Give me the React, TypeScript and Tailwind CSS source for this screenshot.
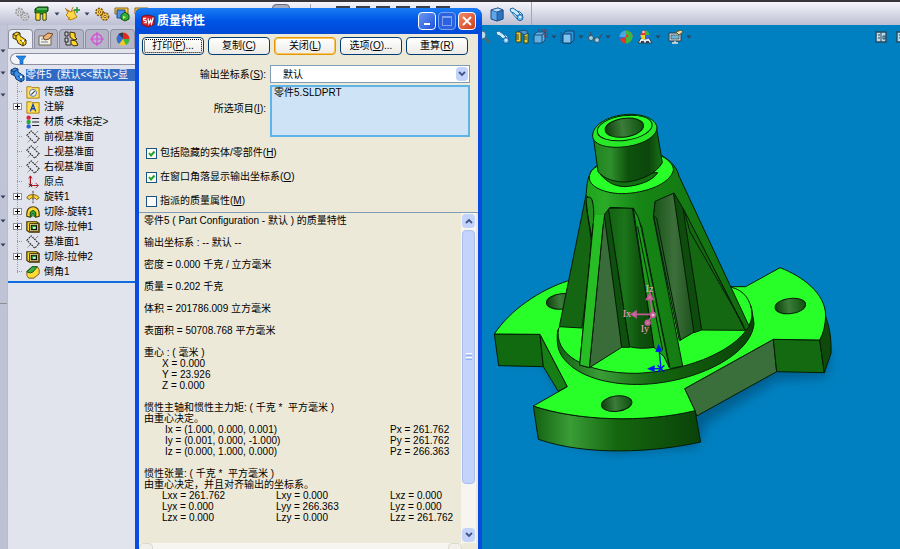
import type { ReactNode } from "react";

type IconProps = { children: ReactNode; className?: string; box?: string };

const Icon = ({ children, className = "h-4 w-4", box = "0 0 16 16" }: IconProps) => (
  <svg viewBox={box} className={`block shrink-0 ${className}`} aria-hidden="true">
    {children}
  </svg>
);

const Caret = () => (
  <Icon className="h-1 w-1.5" box="0 0 6 4">
    <path d="M0.5 0.500h5L3 3.500z" fill="#33415c" />
  </Icon>
);

/* toolbar icons */

const GearsIcon = ({ fill, stroke }: { fill: string; stroke: string }) => (
  <Icon>
    <circle cx="5.5" cy="6" r="3.6" fill={fill} stroke={stroke} strokeWidth="1.6" strokeDasharray="2 1" />
    <circle cx="5.5" cy="6" r="1.2" fill="#fff" stroke={stroke} />
    <circle cx="11" cy="10.5" r="3.6" fill={fill} stroke={stroke} strokeWidth="1.6" strokeDasharray="2 1" />
    <circle cx="11" cy="10.5" r="1.2" fill="#fff" stroke={stroke} />
  </Icon>
);

const FixtureIcon = () => (
  <Icon>
    <path d="M1 3l3-2h10v4l-2 1v8H9V8H6v6H2V7H1z" fill="#1c8a22" stroke="#0d3d10" />
    <path d="M2 7h4v7H2zM9 7h3v7H9z" fill="#ffdf3a" stroke="#5d5208" strokeWidth="0.7" />
    <path d="M3 3h10" stroke="#8be08e" />
  </Icon>
);

const SparkIcon = () => (
  <Icon>
    <path d="M2 3l5 3 3-2 1 4 2 3-4 2-3 1-2-3-2-2 2-2z" fill="#ffd84a" stroke="#b08410" />
    <path d="M1 2l4 4M9 1l-2 5M4 14l2-3" stroke="#d87d12" />
    <path d="M13 1v6M10 4h6" stroke="#15902d" strokeWidth="1.4" />
  </Icon>
);

const WindowPartIcon = () => (
  <Icon>
    <path d="M1 2h13v6H1z" fill="#ffc83d" stroke="#8c6710" />
    <path d="M3 4h8v8H3z" fill="#4d8fe0" stroke="#1d4a93" />
    <path d="M7 9l4-3 4 3v4l-4 2-4-2z" fill="#2fae38" stroke="#0e5414" />
    <path d="M9 10l3 1-3 2z" fill="#ffe94e" />
  </Icon>
);

const CubeIcon = () => (
  <Icon>
    <path d="M2 4l7-2 5 2v9l-6 2-6-2z" fill="#5ea6e8" stroke="#1a4c8c" />
    <path d="M2 4l6 2 6-2-5-2z" fill="#bfe0fb" stroke="#1a4c8c" strokeWidth="0.7" />
    <path d="M8 6v9l6-2V4z" fill="#2f72be" stroke="#1a4c8c" strokeWidth="0.7" />
  </Icon>
);

const SectionIcon = () => (
  <Icon>
    <path d="M1 3l3-1 4 3 3 1 3 3-3 3-3-2-3-3-3-1z" fill="#c6ecfb" stroke="#1d6da8" />
    <circle cx="11" cy="11.500" r="3" fill="#6cc4f0" stroke="#17559f" />
    <path d="M3 7l5 6M6 3l5 5" stroke="#2c78b5" />
    <circle cx="11" cy="11" r="1" fill="#fff" />
  </Icon>
);

const MagnifierIcon = () => (
  <Icon>
    <circle cx="6" cy="6" r="4" fill="#b9d8e8" stroke="#4e6a78" />
    <path d="M9 9l5 5" stroke="#53656e" strokeWidth="2.4" />
  </Icon>
);

const RulerIcon = () => (
  <Icon>
    <path d="M2 3h5v10H2zM10 4h4v10h-4z" fill="#e8cf3c" stroke="#3a4016" />
    <path d="M5 2l7-1 2 3-4 2z" fill="#4b94ce" stroke="#1a4c7c" />
    <path d="M2 6h3M2 8h3M2 10h3M10 8h3M10 10h3" stroke="#3a4016" />
  </Icon>
);

const OrientationIcon = () => (
  <Icon>
    <path d="M1 6l3-3h8v8l-3 3H1z" fill="#5fb0e4" stroke="#1d4b78" />
    <path d="M1 6h8v8M9 6l3-3" fill="none" stroke="#1d4b78" />
    <path d="M5 1h9v8M11 1v6h4" fill="none" stroke="#8a3046" strokeDasharray="2 1" />
  </Icon>
);

const DisplayStyleIcon = () => (
  <Icon>
    <path d="M3 5l3-3h8v9l-3 3H3z" fill="#2c8fd8" stroke="#15406e" />
    <path d="M3 5h8v9H3z" fill="#7cc4ee" stroke="#15406e" />
    <path d="M1 3v11" stroke="#15406e" strokeDasharray="1 1" />
  </Icon>
);

const GlassesIcon = () => (
  <Icon>
    <circle cx="4" cy="9" r="2.5" fill="#9fd2e8" stroke="#39546a" />
    <circle cx="10" cy="11" r="2.5" fill="#9fd2e8" stroke="#39546a" />
    <path d="M6 9l2 1M3 7l1-4M12 10l3-5" fill="none" stroke="#39546a" strokeWidth="1.300" />
  </Icon>
);

const Ball = ({ r = 6.5, cy = 8 }: { r?: number; cy?: number }) => (
  <>
    <circle cx="8" cy={cy} r={r} fill="#2f6de0" />
    <path d={`M8 ${cy}V${cy - r}A${r} ${r} 0 0 0 ${8 - r} ${cy}z`} fill="#e3362b" />
    <path d={`M8 ${cy}V${cy - r}A${r} ${r} 0 0 1 ${8 + r} ${cy}z`} fill="#3cb83c" />
    <path d={`M8 ${cy}H${8 - r}A${r} ${r} 0 0 0 8 ${cy + r}z`} fill="#f5cf30" />
    <circle cx="6.5" cy={cy - 3} r="1.3" fill="#fff" opacity="0.7" />
  </>
);

/* view toolbar: red top left, green top right, blue and red below */
const AppearanceIcon = () => (
  <Icon>
    <circle cx="8" cy="8" r="6.5" fill="#2f6de0" />
    <path d="M8 8V1.500A6.500 6.500 0 0 1 14.500 8z" fill="#e8c93a" />
    <path d="M8 8H14.500A6.500 6.500 0 0 1 8 14.500z" fill="#3cb83c" />
    <path d="M8 1.500A6.500 6.500 0 0 1 14.500 8L8 8z" fill="#d93a30" />
    <path d="M8 8v6.500A6.500 6.500 0 0 1 2 10z" fill="#e3362b" />
    <path d="M8 8V1.500A6.500 6.500 0 0 0 1.500 8z" fill="#4aa8e0" />
    <path d="M8 1.500A6.500 6.500 0 0 1 14.500 8L11 8 8 5z" fill="#3cb83c" />
  </Icon>
);

const SceneIcon = () => (
  <Icon>
    <path d="M1 14l3-5h8l3 5z" fill="#e5edf0" stroke="#31414c" />
    <path d="M4 12h3v2H4zM9 12h3v2H9z" fill="#31414c" />
    <Ball r={4.5} cy={6} />
  </Icon>
);

const MonitorIcon = () => (
  <Icon>
    <path d="M1 4h12v8H1z" fill="#c9d2d4" stroke="#333d44" />
    <path d="M3 6h8v4H3z" fill="#6fb6d4" stroke="#333d44" strokeWidth="0.600" />
    <path d="M4 14h6M7 12v2" stroke="#e0e4e4" strokeWidth="1.4" />
    <path d="M8 3l5-2 2 2-4 3z" fill="#e5dca0" stroke="#5a5630" />
  </Icon>
);

const PaneIcon = () => (
  <Icon className="h-3 w-3" box="0 0 12 12">
    <path d="M1 1h10v10H1z" fill="#bcdcea" stroke="#24495e" strokeWidth="1.4" />
    <path d="M6 1v10" stroke="#24495e" />
    <path d="M3 4h2M3 7h2M8 5h2v3H8z" stroke="#24495e" fill="none" />
  </Icon>
);

const BarIcon = () => (
  <Icon>
    <path d="M2 1h12v13H2z" fill="#aeb3c4" stroke="#3c3f4a" strokeWidth="2" />
  </Icon>
);

/* tree icons */

const PartIcon = ({ fill, stroke }: { fill: string; stroke: string }) => (
  <Icon>
    <path d="M1 3l4-2 3 1v3l6 4v4l-3 2-5-3-1-3-4-2z" fill={fill} stroke={stroke} />
    <path d="M1 3l3 2 4-3M4 5v3M8 9l3 2 3-2M11 11v4" fill="none" stroke={stroke} />
    <circle cx="11" cy="10" r="1.2" fill="#fff" />
  </Icon>
);

const SensorIcon = () => (
  <Icon>
    <path d="M1 2h5l1 1h8v12H1z" fill="#ffdf63" stroke="#a57607" />
    <circle cx="8" cy="9" r="4" fill="#f7f7f7" stroke="#3d6cae" />
    <path d="M6 11l4-4" stroke="#333" strokeWidth="1.300" />
  </Icon>
);

const NoteIcon = () => (
  <Icon>
    <path d="M1 2h5l1 1h8v12H1z" fill="#ffe054" stroke="#a57607" />
    <path d="M5 13l3-8 3 8M6 10h4" fill="none" stroke="#1443b8" strokeWidth="1.6" />
  </Icon>
);

const MaterialIcon = () => (
  <Icon>
    <circle cx="3" cy="3" r="2.500" fill="#e0213b" />
    <circle cx="3" cy="8" r="2.500" fill="#2aa83a" />
    <circle cx="3" cy="13" r="2.500" fill="#2a5fd8" />
    <path d="M7 4h8M7 8h8M7 12h8" stroke="#222" strokeWidth="1.3" />
  </Icon>
);

const PlaneIcon = () => (
  <Icon>
    <path d="M1 6l5-5 9 9-5 5z" fill="none" stroke="#222" strokeWidth="1.200" strokeDasharray="2 1" />
    <path d="M2 14l4-4M10 5l4-4" stroke="#222" strokeDasharray="1 1" />
  </Icon>
);

const OriginIcon = () => (
  <Icon>
    <path d="M5 1v11h9" fill="none" stroke="#b3121c" strokeWidth="1.4" />
    <path d="M3 4l2-3 2 3M11 9l3 3-3 3" fill="none" stroke="#b3121c" />
    <path d="M3 10l4 4M7 10l-4 4" stroke="#222" />
  </Icon>
);

const RevolveIcon = () => (
  <Icon>
    <path d="M1 9c1-5 12-5 14 0l-3 2-2-2H6l-2 2z" fill="#ffd33e" stroke="#6e5205" />
    <path d="M8 1v14" stroke="#222" strokeDasharray="3 1" />
  </Icon>
);

const CutRevolveIcon = () => (
  <Icon>
    <path d="M1 13C0 5 4 2 8 2s8 3 7 11l-4 1V9L8 7 5 9v5z" fill="#ffd733" stroke="#4c3a05" strokeWidth="1.3" />
    <path d="M5 13V8l3-2 3 2v5H9v-3H7v3z" fill="#2fa73b" stroke="#0f5316" />
  </Icon>
);

const CutExtrudeIcon = () => (
  <Icon>
    <path d="M1 2h11l3 2v10H4l-3-2z" fill="#ffd91f" stroke="#3b2f05" strokeWidth="1.4" />
    <path d="M4 4h10v9H4z" fill="#fff0a0" stroke="#3b2f05" />
    <path d="M6 6h6v5H6z" fill="#2a9b39" stroke="#111" strokeWidth="1.2" />
    <path d="M8 8h3v2H8z" fill="#e9f7e9" />
  </Icon>
);

const ChamferIcon = () => (
  <Icon>
    <path d="M1 7l6-5h6l2 3v5l-6 5H3l-2-3z" fill="#ffdb37" stroke="#6c5106" />
    <path d="M1 8l6-6h6l-5 6-3 1z" fill="#37b048" stroke="#105018" />
  </Icon>
);

const tree = [
  { label: "传感器", icon: <SensorIcon /> },
  { label: "注解", icon: <NoteIcon />, expandable: true },
  { label: "材质 <未指定>", icon: <MaterialIcon /> },
  { label: "前视基准面", icon: <PlaneIcon /> },
  { label: "上视基准面", icon: <PlaneIcon /> },
  { label: "右视基准面", icon: <PlaneIcon /> },
  { label: "原点", icon: <OriginIcon /> },
  { label: "旋转1", icon: <RevolveIcon />, expandable: true },
  { label: "切除-旋转1", icon: <CutRevolveIcon />, expandable: true },
  { label: "切除-拉伸1", icon: <CutExtrudeIcon />, expandable: true },
  { label: "基准面1", icon: <PlaneIcon /> },
  { label: "切除-拉伸2", icon: <CutExtrudeIcon />, expandable: true },
  { label: "倒角1", icon: <ChamferIcon /> },
];

const tabs = [
  { name: "设计树", icon: <PartIcon fill="#ffd52e" stroke="#3b3005" /> },
  {
    name: "属性",
    icon: (
      <Icon>
        <path d="M1 5h12v9H1z" fill="#f5f1e2" stroke="#6d6653" />
        <path d="M3 8h5M3 11h7" stroke="#6a7da6" />
        <path d="M5 6l5-4 5 1-4 5-4 1z" fill="#eab27c" stroke="#70451e" />
      </Icon>
    ),
  },
  {
    name: "配置",
    icon: (
      <Icon>
        <path d="M2 1h3v4H2zM2 7h3v4H2zM3 11v3h5" fill="#d7d7d7" stroke="#222" />
        <path d="M7 1l5 1v4l2 2-3 1-4-3zM8 9l5 1 2 4-4 1-3-2z" fill="#ffd52e" stroke="#3b3005" />
      </Icon>
    ),
  },
  {
    name: "尺寸",
    icon: (
      <Icon>
        <circle cx="8" cy="8" r="5" fill="none" stroke="#d64fd8" strokeWidth="1.4" />
        <path d="M8 1v14M1 8h14" stroke="#d64fd8" strokeWidth="1.2" />
      </Icon>
    ),
  },
  {
    name: "外观",
    icon: (
      <Icon>
        <circle cx="8" cy="8" r="6.5" fill="#f2c92b" />
        <path d="M8 8L3 3.500A6.500 6.500 0 0 1 8 1.500z" fill="#333a52" />
        <path d="M8 8V1.500A6.500 6.500 0 0 1 14.500 8z" fill="#e02a22" />
        <path d="M8 8H1.500A6.500 6.500 0 0 1 3.500 3.500z" fill="#2f6de0" />
        <path d="M8 8h6.500A6.500 6.500 0 0 1 11 14z" fill="#3cb83c" />
        <path d="M8 8H1.500A6.500 6.500 0 0 0 4 13z" fill="#2f6de0" />
      </Icon>
    ),
  },
];

const TopToolbar = () => (
  <header className="flex h-[25px] shrink-0 items-center border-t-2 border-[#38343c] bg-gradient-to-b from-[#f6f6fb] to-[#bdbfd3]">
    <div className="ml-3.5 flex w-[455px] shrink-0 items-center gap-1">
      <button aria-label="干涉"><GearsIcon fill="#d5d5d8" stroke="#98989e" /></button>
      <button aria-label="夹具"><FixtureIcon /></button>
      <Caret />
      <button aria-label="新建"><SparkIcon /></button>
      <Caret />
      <button aria-label="齿轮"><GearsIcon fill="#ffce45" stroke="#7d5710" /></button>
      <button aria-label="窗口"><WindowPartIcon /></button>
      <button aria-label="装配"><WindowPartIcon /></button>
      <button aria-label="上色" className="ml-[118px] h-5 w-[18px] rounded-sm border border-[#6a6d80] bg-[#a9acc0]" />
      <span className="ml-4 h-5 w-px bg-[#a5a5b0]" />
      <div className="ml-5 flex gap-1">
        {["前视", "后视", "左视", "右视", "上视", "下视"].map((view) => (
          <button key={view} aria-label={view}><BarIcon /></button>
        ))}
      </div>
    </div>
    <div className="ml-5 flex items-center gap-1">
      <button aria-label="实体"><CubeIcon /></button>
      <button aria-label="剖面"><SectionIcon /></button>
    </div>
    <div className="ml-1.5 h-full w-px bg-[#a5a5b0]" />
  </header>
);

const FeatureTree = () => (
  <aside className="w-[127px] shrink-0 bg-[#e1e4ec]">
    <div className="flex h-6 items-end gap-px border-b border-[#9a9cab] bg-[#c9ccda]">
      {tabs.map((tab, i) => (
        <button
          key={tab.name}
          aria-label={tab.name}
          className={`flex h-[19px] flex-1 items-center justify-center rounded-t border border-b-0 border-[#8f91a3] ${
            i === 0 ? "bg-[#eceef5]" : "bg-[#b4b6c8]"
          }`}
        >
          {tab.icon}
        </button>
      ))}
    </div>
    <div className="relative mt-1 ml-0.5">
      <input
        aria-label="筛选"
        className="block h-3 w-full rounded-l-full border border-r-0 border-[#8b8fa0] bg-[#f3f4f9] pl-6 text-[10px] outline-none"
      />
      <span className="absolute top-0.5 left-1.5">
        <Icon className="h-2.5 w-2.5" box="0 0 10 10">
          <path d="M0 1h10L7 5v4H4V5z" fill="#1f86e6" stroke="#0d57a8" strokeWidth="0.6" />
        </Icon>
      </span>
    </div>
    <div className="mt-0.5 flex h-[15px] items-center pl-0.5">
      <PartIcon fill="#3d8fe6" stroke="#0c3672" />
      <span className="flex-1 bg-[#316ac5] text-[10px] leading-3 whitespace-pre text-white">
        {"零件5  (默认<<默认>显"}
      </span>
    </div>
    <ul className="relative py-0.5">
      <li aria-hidden="true" className="absolute top-0 bottom-2 left-[9px] border-l border-dotted border-[#9b9b94]" />
      {tree.map((node) => (
        <li key={node.label} className="relative flex h-[15px] items-center pl-[5px] text-[10px] whitespace-nowrap text-black">
          {node.expandable ? (
            <button
              aria-label={`展开 ${node.label}`}
              className="flex h-[7px] w-[9px] items-center justify-center border border-[#8a8f9c] bg-white"
            >
              <Icon className="h-[5px] w-[5px]" box="0 0 5 5">
                <path d="M0 2.5h5M2.5 0v5" stroke="#000" />
              </Icon>
            </button>
          ) : (
            <span className="ml-1 w-[5px] border-t border-dotted border-[#9b9b94]" />
          )}
          <span className="mr-1 ml-1 [&>svg]:h-3.5 [&>svg]:w-3.5">{node.icon}</span>
          {node.label}
        </li>
      ))}
    </ul>
    <div className="h-0.5 bg-[#0d6de0]" />
  </aside>
);

const ViewToolbar = () => (
  <div className="flex h-6 items-center justify-between pl-[341px]">
    <div className="flex items-center gap-[3px]">
      <button aria-label="缩放"><MagnifierIcon /></button>
      <button aria-label="剖面视图"><SectionIcon /></button>
      <button aria-label="测量"><RulerIcon /></button>
      <button aria-label="视图定向" className="flex items-center gap-0.5"><OrientationIcon /><Caret /></button>
      <button aria-label="显示样式" className="flex items-center gap-0.5"><DisplayStyleIcon /><Caret /></button>
      <button aria-label="隐藏项目" className="flex items-center gap-0.5"><GlassesIcon /><Caret /></button>
      <button aria-label="外观" className="ml-1"><AppearanceIcon /></button>
      <button aria-label="布景" className="flex items-center gap-0.5"><SceneIcon /><Caret /></button>
      <button aria-label="视图设定" className="ml-1 flex items-center gap-0.5"><MonitorIcon /><Caret /></button>
    </div>
    <div className="flex gap-[9px] overflow-hidden">
      <button aria-label="左窗格"><PaneIcon /></button>
      <div className="w-1 overflow-hidden">
        <button aria-label="右窗格" className="block"><PaneIcon /></button>
      </div>
    </div>
  </div>
);

const Model = () => (
  <svg viewBox="0 0 1080 1080" className="block h-[360px] w-[360px]" role="img" aria-label="零件5">
    <defs>
      <linearGradient id="neck">
        <stop offset="0" stopColor="#1d861b" />
        <stop offset="0.25" stopColor="#2f8f2c" />
        <stop offset="0.5" stopColor="#0e520d" />
        <stop offset="0.8" stopColor="#0c460b" />
        <stop offset="1" stopColor="#177316" />
      </linearGradient>
      <linearGradient id="lobe">
        <stop offset="0" stopColor="#136012" />
        <stop offset="0.22" stopColor="#3a9d36" />
        <stop offset="0.5" stopColor="#15660f" />
        <stop offset="1" stopColor="#0a4209" />
      </linearGradient>
      <linearGradient id="cone">
        <stop offset="0" stopColor="#18a318" />
        <stop offset="0.15" stopColor="#2bab28" />
        <stop offset="0.35" stopColor="#168615" />
        <stop offset="1" stopColor="#126a10" />
      </linearGradient>
      <linearGradient id="bore">
        <stop offset="0" stopColor="#0c3f0b" />
        <stop offset="0.45" stopColor="#3c7c3a" />
        <stop offset="1" stopColor="#0e500d" />
      </linearGradient>
      <linearGradient id="core">
        <stop offset="0" stopColor="#116110" />
        <stop offset="0.35" stopColor="#1c741b" />
        <stop offset="0.7" stopColor="#0e520d" />
        <stop offset="1" stopColor="#0c470b" />
      </linearGradient>
      <linearGradient id="pocket">
        <stop offset="0" stopColor="#175316" />
        <stop offset="0.5" stopColor="#3d6f3b" />
        <stop offset="1" stopColor="#1a4f19" />
      </linearGradient>
      <filter id="soft" x="-20%" y="-20%" width="140%" height="140%">
        <feGaussianBlur stdDeviation="16" />
      </filter>
    </defs>

    <path d="M60 780L190 780 250 900 180 1000 400 1060 650 1040 680 970 890 840 1040 830 1050 750 600 700z" fill="#04527f" opacity="0.75" filter="url(#soft)" />

    <g stroke="#041c04" strokeWidth="3" strokeLinejoin="round">
      {/* base plate */}
      <path d="M43 702L180 703 190 800 56 797z" fill="#126a10" />
      <path d="M180 703L262 860 235 874 190 800z" fill="#177e16" />
      <path d="M614 866L880 718 890 815 650 948 645 932z" fill="#3a6e3a" />
      <path d="M880 718L1019 720 1033 818 890 815z" fill="#136a11" />
      <path d="M1037 650C1052 690 1054 725 1053 760L1033 818 1019 720z" fill="#0d4a0b" />
      <path d="M160 918C290 962 490 970 645 932L662 1026C520 1058 320 1068 175 1018z" fill="url(#lobe)" />
      <path
        d="M43 702C90 630 180 570 262 543L760 560 797 560 900 503C970 530 1035 580 1037 645Q1036 690 1019 720L880 718 614 866 645 932C490 970 290 962 160 918L262 860 180 703z"
        fill="#28ff28"
      />
      <ellipse cx="245" cy="604" rx="46" ry="23" transform="rotate(-7 245 604)" fill="url(#bore)" />
      <ellipse cx="931" cy="618" rx="46" ry="23" transform="rotate(-7 931 618)" fill="url(#bore)" />
      <ellipse cx="410" cy="911" rx="46" ry="23" transform="rotate(-7 410 911)" fill="url(#bore)" />

      {/* raised disc */}
      <path d="M233 690C228 740 236 762 262 788C310 836 400 856 490 853C650 846 815 765 822 670L814 620z" fill="url(#lobe)" />
      <path d="M236 684C220 760 310 821 470 820C650 812 810 730 816 645C815 600 790 570 755 562L400 560z" fill="#28ff28" />

      {/* fins and pockets */}
      <path d="M318 285L238 680 306 684 340 420 335 300z" fill="#146612" />
      <path d="M345 330L385 330 425 742 328 803z" fill="#3a6c3a" />
      <path d="M372 340L386 325 449 742 425 742z" fill="#0e500d" />
      <path d="M385 325L457 323 522 742C500 746 470 746 449 740z" fill="url(#core)" />
      <path d="M525 302L582 278 645 695 598 722 520 345z" fill="url(#pocket)" />
      <path d="M580 278L612 322 665 690 642 698z" fill="#0e4c0d" />
      <path d="M608 318L795 691 665 690z" fill="#146812" />

      {/* cone body, ribs run down from its skirt */}
      <path
        d="M320 265C322 230 335 205 350 198L548 168C575 185 592 205 597 228L808 680 797 691 612 330 582 279 525 304 520 350 608 798 570 806 485 380 460 325 390 322 372 345 328 803 299 795 340 360 336 300 318 287z"
        fill="url(#cone)"
      />
      <path d="M318 295Q330 285 336 300Q344 325 340 370L335 410 322 340z" fill="#208b1e" />
      <path d="M340 370L299 795 328 803 366 400 372 345 345 345z" fill="#27bd24" stroke="none" />
      <path d="M340 370L299 795 328 803 370 370" fill="none" />
      <path d="M460 325Q478 350 484 385L568 803 552 770 522 742z" fill="#1c9a1a" />
      <path d="M473 380L548 750M520 345L530 355 602 722M612 330L630 395 790 675M318 310L335 430" fill="none" />

      {/* shoulder and neck */}
      <path d="M329 240C325 222 335 208 350 200L548 170C570 182 582 198 580 212C570 250 500 280 425 281C375 280 335 262 329 240z" fill="#28ff28" />
      <path d="M360 222C385 252 410 259 435 260C480 257 520 240 533 218z" fill="#117010" />
      <path d="M340 110L354 215C375 238 405 247 440 246C490 240 530 218 547 188L529 80z" fill="url(#neck)" />
      <path d="M338 105C340 70 395 43 450 43C500 43 530 62 531 84C528 115 475 141 410 142C365 142 336 128 338 105z" fill="#28e828" />
      <ellipse cx="434" cy="84" rx="83" ry="37" transform="rotate(-8 434 84)" fill="#28ff28" />
      <ellipse cx="433" cy="83" rx="58" ry="28" transform="rotate(-8 433 83)" fill="url(#bore)" />
    </g>

    {/* inertia axes */}
    <g stroke="#c05a94" fill="#d873a8" strokeWidth="5">
      <path d="M518 643L510 590M518 643H460M518 643L503 668" />
      <path d="M500 598l10-18 8 18zM468 634l-14 9 14 9z" />
      <circle cx="519" cy="645" r="7" fill="#f2b6d3" />
      <circle cx="503" cy="668" r="7" />
    </g>
    <g fill="#ffa6d2" fontSize="30" fontFamily="'Liberation Serif', serif">
      <text x="497" y="576">Iz</text>
      <text x="428" y="650">Ix</text>
      <text x="482" y="696">Iy</text>
    </g>
    <g stroke="#0018f0" fill="#0018f0" strokeWidth="4">
      <path d="M543 806L537 745M543 806H510M533 796l20 20M553 796l-20 20" />
      <path d="M529 754l7-17 8 16zM522 799l-16 7 16 7z" />
    </g>
  </svg>
);

const actions = [
  { text: "打印", key: "P", tail: "...", look: "border-[#003c74] outline-1 outline-dotted -outline-offset-3 outline-black" },
  { text: "复制", key: "C", tail: "", look: "border-[#003c74]" },
  { text: "关闭", key: "L", tail: "", look: "border-[#e59700] shadow-[inset_0_0_0_1px_#f8c45c]" },
  { text: "选项", key: "O", tail: "...", look: "border-[#003c74]" },
  { text: "重算", key: "R", tail: "", look: "border-[#003c74]" },
];

const checks = [
  { text: "包括隐藏的实体/零部件", key: "H", on: true },
  { text: "在窗口角落显示输出坐标系", key: "O", on: true },
  { text: "指派的质量属性", key: "M", on: false },
];

const principal = [
  ["Ix = (1.000, 0.000, 0.001)", "Px = 261.762"],
  ["Iy = (0.001, 0.000, -1.000)", "Py = 261.762"],
  ["Iz = (0.000, 1.000, 0.000)", "Pz = 266.363"],
];

const tensor = [
  ["Lxx = 261.762", "Lxy = 0.000", "Lxz = 0.000"],
  ["Lyx = 0.000", "Lyy = 266.363", "Lyz = 0.000"],
  ["Lzx = 0.000", "Lzy = 0.000", "Lzz = 261.762"],
];

const Mnemonic = ({ letter }: { letter: string }) => (
  <>
    (<u>{letter}</u>)
  </>
);

const Chevron = ({ up = false }: { up?: boolean }) => (
  <Icon className="h-1.5 w-2" box="0 0 8 6">
    <path d={up ? "M1 5l3-3 3 3" : "M1 1l3 3 3-3"} fill="none" stroke="#3f5685" strokeWidth="1.8" />
  </Icon>
);

const Report = () => (
  <div className="flex-1 overflow-hidden pt-0.5 pl-[5px] text-[10px] leading-[11px] whitespace-nowrap">
    <p className="mb-[11px]">零件5 ( Part Configuration - 默认 ) 的质量特性</p>
    <p className="mb-[11px]">输出坐标系 : -- 默认 --</p>
    <p className="mb-[11px]">密度 = 0.000 千克 / 立方毫米</p>
    <p className="mb-[11px]">质量 = 0.202 千克</p>
    <p className="mb-[11px]">体积 = 201786.009 立方毫米</p>
    <p className="mb-[11px]">表面积 = 50708.768 平方毫米</p>
    <p>重心 : ( 毫米 )</p>
    <div className="mb-[11px] pl-[18px]">
      <p>X = 0.000</p>
      <p>Y = 23.926</p>
      <p>Z = 0.000</p>
    </div>
    <p>惯性主轴和惯性主力矩: ( 千克 *&nbsp; 平方毫米 )</p>
    <p>由重心决定。</p>
    <table className="mb-[11px] w-full table-fixed">
      <tbody>
        {principal.map(([axis, moment]) => (
          <tr key={axis}>
            <td className="w-[246px] p-0 pl-[21px]">{axis}</td>
            <td className="p-0">{moment}</td>
          </tr>
        ))}
      </tbody>
    </table>
    <p>惯性张量: ( 千克 *&nbsp; 平方毫米 )</p>
    <p>由重心决定，并且对齐输出的坐标系。</p>
    <table className="w-full table-fixed">
      <tbody>
        {tensor.map((row) => (
          <tr key={row[0]}>
            <td className="w-[132px] p-0 pl-[18px]">{row[0]}</td>
            <td className="w-[114px] p-0">{row[1]}</td>
            <td className="p-0">{row[2]}</td>
          </tr>
        ))}
      </tbody>
    </table>
  </div>
);

const MassPropertiesDialog = () => (
  <section
    role="dialog"
    aria-labelledby="dialog-title"
    className="absolute top-2 bottom-0 left-[135px] flex w-[347px] flex-col rounded-t-lg border-x-4 border-[#0a4be0] bg-[#ece9d8] text-[10px] text-black"
  >
    <div className="-mx-1 flex h-[26px] shrink-0 items-center rounded-t-lg bg-gradient-to-b from-[#1c7cf5] via-[#0054e6] to-[#0049d6] px-1.5">
      <Icon className="h-3.5 w-3.5">
        <path d="M1 3l6-2 8 2v9l-7 3-7-3z" fill="#d3202a" stroke="#7e0b12" />
        <path d="M6 5H3v2l3 1v2H3M8 5l1 6 2-4 1 4 2-7" fill="none" stroke="#fff" strokeWidth="1.4" />
      </Icon>
      <h1 id="dialog-title" className="ml-0.5 flex-1 text-xs font-bold text-white">质量特性</h1>
      <div className="flex gap-0.5">
        <button aria-label="最小化" className="flex h-[18px] w-[18px] items-end justify-center rounded-sm border border-white bg-gradient-to-br from-[#6b98f5] to-[#1f4fd6] pb-1">
          <span className="h-0.5 w-1.5 bg-white" />
        </button>
        <button aria-label="最大化" disabled className="flex h-[18px] w-[18px] items-center justify-center rounded-sm border border-[#7fa3f2] bg-[#2a62e0]">
          <span className="h-2.5 w-2.5 border border-t-2 border-[#7fa3f2]" />
        </button>
        <button aria-label="关闭窗口" className="flex h-[18px] w-[18px] items-center justify-center rounded-sm border border-white bg-gradient-to-br from-[#f08a68] to-[#cf3a12]">
          <Icon className="h-2.5 w-2.5" box="0 0 10 10">
            <path d="M1 1l8 8M9 1l-8 8" stroke="#fff" strokeWidth="1.8" />
          </Icon>
        </button>
      </div>
    </div>

    <div className="mt-[3px] mr-[10px] ml-[3px] grid grid-cols-5 gap-1">
      {actions.map((a) => (
        <button
          key={a.text}
          className={`h-[18px] rounded-sm border bg-gradient-to-b from-white to-[#ecebe6] leading-4 whitespace-nowrap ${a.look}`}
        >
          {a.text}
          <Mnemonic letter={a.key} />
          {a.tail}
        </button>
      ))}
    </div>

    <div className="mt-[10px] mr-2 grid grid-cols-[127px_1fr] gap-x-1 gap-y-0.5">
      <label htmlFor="coord" className="self-center text-right">
        输出坐标系<Mnemonic letter="S" />:
      </label>
      <div className="relative">
        <select id="coord" className="block h-[18px] w-full appearance-none border border-[#7f9db9] bg-white pl-3 text-[10px] outline-none">
          <option>默认</option>
        </select>
        <span className="pointer-events-none absolute inset-y-0.5 right-0.5 flex w-3 items-center justify-center rounded-sm bg-[#c3d3fb]">
          <Chevron />
        </span>
      </div>
      <label htmlFor="items" className="mt-4 text-right">
        所选项目<Mnemonic letter="I" />:
      </label>
      <textarea
        id="items"
        readOnly
        className="block h-[52px] w-full resize-none border-2 border-[#5db4e6] bg-[#cfe3f6] px-0.5 text-[10px] leading-3 outline-none"
        defaultValue="零件5.SLDPRT"
      />
    </div>

    <div className="mt-2.5 mb-[5px] ml-[7px] flex flex-col gap-3">
      {checks.map((c) => (
        <label key={c.text} className="flex h-3 items-center gap-[3px] leading-3">
          <input
            type="checkbox"
            defaultChecked={c.on}
            className="peer h-[11px] w-[11px] appearance-none border border-[#1c5180] bg-[#fbfbf8]"
          />
          <span className="pointer-events-none -ml-[14px] w-[11px] opacity-0 peer-checked:opacity-100">
            <Icon className="h-[11px] w-[11px]" box="0 0 11 11">
              <path d="M3 5l2 2.500 3.500-4" fill="none" stroke="#21a121" strokeWidth="1.9" />
            </Icon>
          </span>
          <span>
            {c.text}
            <Mnemonic letter={c.key} />
          </span>
        </label>
      ))}
    </div>

    <div className="flex min-h-0 flex-1 border-t border-[#7f9db9]">
      <Report />
      <div className="flex w-[15px] shrink-0 flex-col bg-[#f6f5f0] p-px">
        <button aria-label="向上滚动" className="flex h-3.5 items-center justify-center rounded-sm bg-[#c3d3fb]">
          <Chevron up />
        </button>
        <div className="mt-0.5 flex min-h-0 flex-[256] flex-col items-center justify-center gap-px rounded-sm border border-[#a9bdf0] bg-[#c3d3fb]">
          <span className="h-px w-1.5 bg-white" />
          <span className="h-px w-1.5 bg-[#8cb0f8]" />
          <span className="h-px w-1.5 bg-white" />
          <span className="h-px w-1.5 bg-[#8cb0f8]" />
        </div>
        <div className="flex-[45]" />
        <button aria-label="向下滚动" className="flex h-3.5 items-center justify-center rounded-sm bg-[#c3d3fb]">
          <Chevron />
        </button>
      </div>
      <div className="w-0.5 shrink-0" />
    </div>
    <div className="mr-4 flex h-1.5 shrink-0 justify-between overflow-hidden bg-[#f6f5f0]">
      <button aria-label="向左滚动" disabled className="h-3.5 w-3.5 rounded-sm border border-[#dcdad0] bg-[#f0efe8]" />
      <button aria-label="向右滚动" disabled className="h-3.5 w-3.5 rounded-sm border border-[#dcdad0] bg-[#f0efe8]" />
    </div>
  </section>
);

/* overflow carets of the docked toolbar, top group then bottom group */
const DockStrip = () => (
  <div className="flex w-2 shrink-0 flex-col border-r border-[#b9bccb] bg-gradient-to-b from-[#c2c5d8] to-[#bcc1d3]">
    <div className="flex flex-col gap-[98px] border-b border-[#8d8d92] pt-6 pb-14">
      <div className="flex flex-col gap-[18px]">
        <Caret />
        <Caret />
        <Caret />
      </div>
      <div className="flex flex-col gap-5">
        <Caret />
        <Caret />
        <Caret />
      </div>
    </div>
  </div>
);

export default function App() {
  return (
    <div className="relative flex h-screen flex-col overflow-hidden bg-[#0080c0] font-['Liberation_Sans','Noto_Sans_CJK_SC',sans-serif]">
      <TopToolbar />
      <div className="flex min-h-0 flex-1">
        <DockStrip />
        <FeatureTree />
        <main className="min-w-0 flex-1 overflow-hidden">
          <ViewToolbar />
          <div className="mt-[51px] ml-[345px]">
            <Model />
          </div>
        </main>
      </div>
      <MassPropertiesDialog />
    </div>
  );
}
